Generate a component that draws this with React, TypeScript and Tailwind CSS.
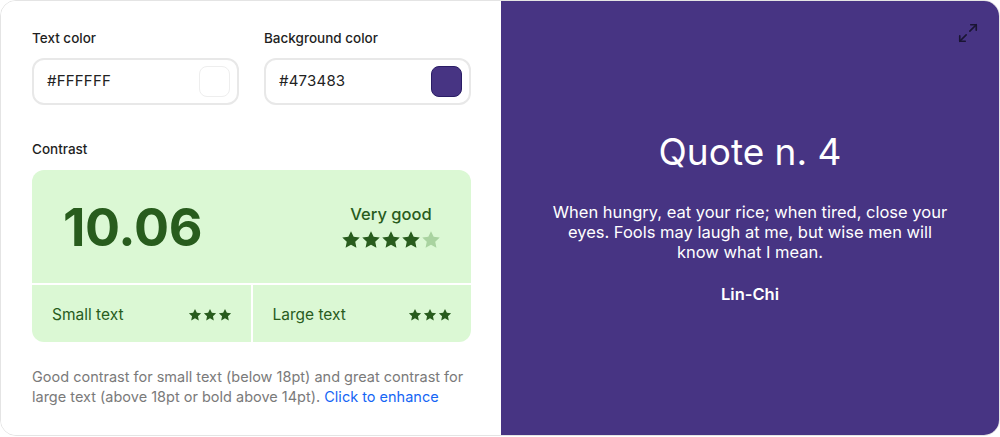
const Star = ({ className }: { className: string }) => (
  <svg viewBox="0 0 24 24" className={className} fill="currentColor">
    <path d="M12 1.5l3.2 6.6 7.3.9-5.4 5 1.4 7.3L12 17.7l-6.5 3.6 1.4-7.3-5.4-5 7.3-.9z" />
  </svg>
);

function ColorField({ label, value, swatch }: { label: string; value: string; swatch: string }) {
  return (
    <div className="flex-1">
      <div className="text-[13.5px] font-medium text-[#1f1f1f] leading-none mb-[12px]">{label}</div>
      <div className="h-[47px] rounded-xl border-2 border-[#e8e8e8] flex items-center justify-between pl-[13px] pr-[7px]">
        <span className="text-[15px] text-[#222] tracking-[0.2px]">{value}</span>
        <div className={`w-[31px] h-[31px] rounded-lg ${swatch}`} />
      </div>
    </div>
  );
}

export default function App() {
  return (
    <div className="w-[1000px] h-[437px] bg-white" style={{ fontFamily: "Inter, 'Noto Sans', sans-serif" }}>
      <div className="h-[436px] flex rounded-2xl border border-[#e4e4e4] overflow-hidden">
        {/* left: controls */}
        <div className="w-[500px] bg-white pl-[31px] pr-[30px] pt-[31px]">
          <div className="flex gap-[25px]">
            <ColorField label="Text color" value="#FFFFFF" swatch="bg-white border border-[#eeeeee]" />
            <ColorField label="Background color" value="#473483" swatch="bg-[#473483] border border-[#2a1d66]" />
          </div>

          <div className="text-[13.5px] font-medium text-[#1f1f1f] leading-none mt-[38px] mb-[14px]">Contrast</div>

          <div className="rounded-xl bg-[#dbf8d4] text-[#285c1d] overflow-hidden">
            <div className="h-[113px] flex items-center justify-between pl-[31px] pr-[30px]">
              <div className="text-[52px] font-bold tracking-[-0.3px] leading-none mt-[3px]">10.06</div>
              <div className="flex flex-col items-center mt-[3px]">
                <div className="text-[16.5px] font-medium leading-none">Very good</div>
                <div className="flex mt-[8px]">
                  <Star className="w-[20px] h-[20px]" />
                  <Star className="w-[20px] h-[20px]" />
                  <Star className="w-[20px] h-[20px]" />
                  <Star className="w-[20px] h-[20px]" />
                  <Star className="w-[20px] h-[20px] text-[#a9d3a0]" />
                </div>
              </div>
            </div>
            <div className="flex border-t-2 border-white h-[59px]">
              <div className="flex-1 flex items-center justify-between pl-[20px] pr-[19px] border-r-2 border-white">
                <span className="text-[15.5px] leading-none mt-[2px]">Small text</span>
                <div className="flex gap-[1px] mt-[2px]">
                  <Star className="w-[14px] h-[14px]" />
                  <Star className="w-[14px] h-[14px]" />
                  <Star className="w-[14px] h-[14px]" />
                </div>
              </div>
              <div className="flex-1 flex items-center justify-between pl-[20px] pr-[19px]">
                <span className="text-[15.5px] leading-none mt-[2px]">Large text</span>
                <div className="flex gap-[1px] mt-[2px]">
                  <Star className="w-[14px] h-[14px]" />
                  <Star className="w-[14px] h-[14px]" />
                  <Star className="w-[14px] h-[14px]" />
                </div>
              </div>
            </div>
          </div>

          <p className="mt-[25px] text-[14.5px] leading-[20px] text-[#7a7a7a]">
            Good contrast for small text (below 18pt) and great contrast for large text (above 18pt or bold above 14pt).{" "}
            <span className="text-[#1565f5]">Click to enhance</span>
          </p>
        </div>

        {/* right: preview */}
        <div className="flex-1 bg-[#473483] relative flex flex-col items-center pt-[132px] text-white">
          <svg
            viewBox="0 0 24 24"
            className="absolute top-[21px] right-[20px] w-[22px] h-[22px] text-[#1a1533]"
            fill="none"
            stroke="currentColor"
            strokeWidth="1.8"
            strokeLinecap="round"
            strokeLinejoin="round"
          >
            <path d="M15 3h6v6" />
            <path d="M21 3l-7 7" />
            <path d="M9 21H3v-6" />
            <path d="M3 21l7-7" />
          </svg>
          <h1 className="text-[37px] leading-none font-normal">Quote n. 4</h1>
          <p className="mt-[32px] w-[404px] text-center text-[16.5px] leading-[20px]">
            When hungry, eat your rice; when tired, close your eyes. Fools may laugh at me, but wise men will know what I mean.
          </p>
          <div className="mt-[24px] text-[16.5px] font-semibold leading-none">Lin-Chi</div>
        </div>
      </div>
    </div>
  );
}
